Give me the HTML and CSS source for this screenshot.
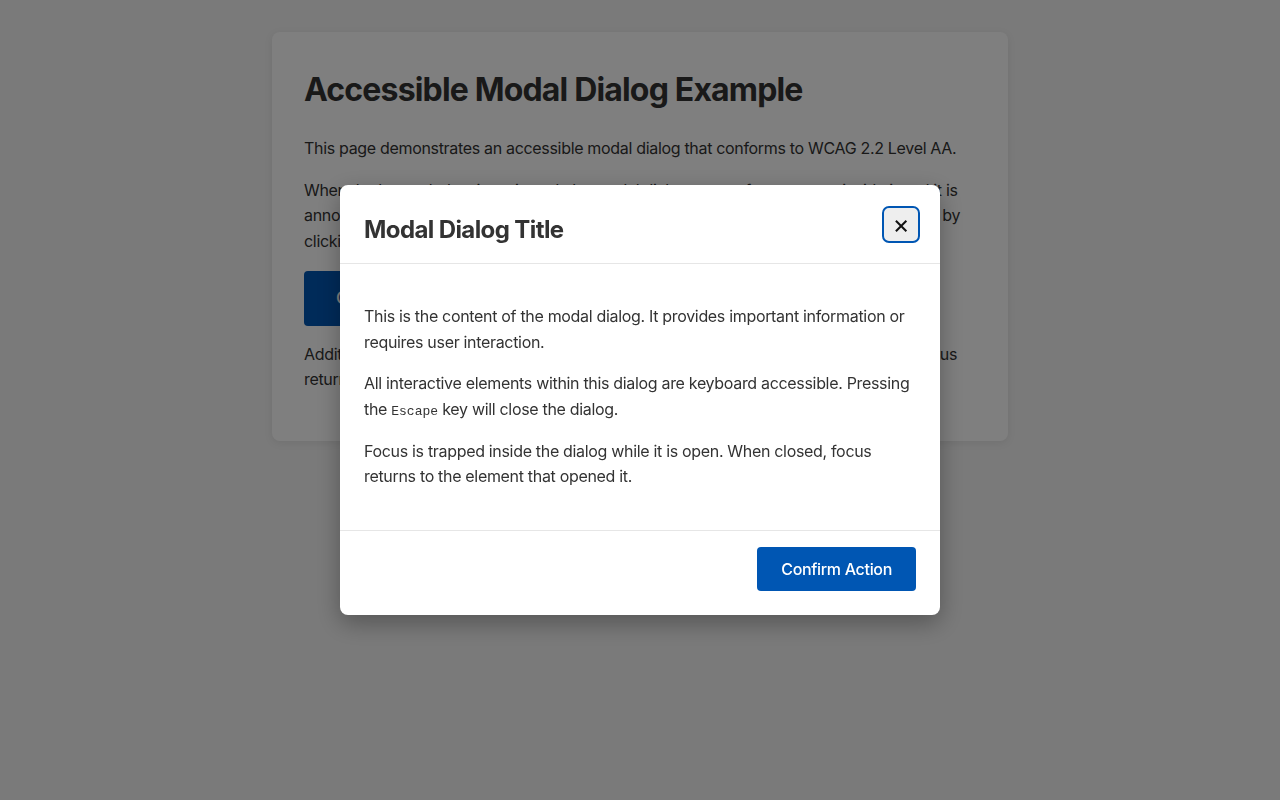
FILE: index.html
```html
<!DOCTYPE html>
<html lang="en">
<head>
  <meta charset="utf-8">
  <title>Accessible Modal Dialog Example</title>
  <link rel="stylesheet" href="styles.css">
</head>
<body>
  <main class="container" aria-hidden="true">
    <h1>Accessible Modal Dialog Example</h1>
    <p>This page demonstrates an accessible modal dialog that conforms to WCAG 2.2 Level AA.</p>
    <p>When the button below is activated, the modal dialog opens, focus moves inside it and it is announced to screen readers. It can be closed with the Escape key, the close button, or by clicking outside of the dialog.</p>
    <button class="button open-button" type="button">Open Modal Dialog</button>
    <p>Additional page content stays inert while the dialog is open. When the dialog closes, focus returns to the button that opened it.</p>
  </main>

  <div class="overlay">
    <div class="modal" role="dialog" aria-modal="true" aria-labelledby="modal-title">
      <div class="modal-header">
        <h2 id="modal-title">Modal Dialog Title</h2>
        <button class="close-button" type="button" aria-label="Close dialog">&times;</button>
      </div>

      <div class="modal-body">
        <p>This is the content of the modal dialog. It provides important information or requires user interaction.</p>
        <p>All interactive elements within this dialog are keyboard accessible. Pressing the <code>Escape</code> key will close the dialog.</p>
        <p>Focus is trapped inside the dialog while it is open. When closed, focus returns to the element that opened it.</p>
      </div>

      <div class="modal-footer">
        <button class="button" type="button">Confirm Action</button>
      </div>
    </div>
  </div>
</body>
</html>
```

FILE: styles.css
```css
body {
  font-family: Inter, "Noto Sans", Arial, sans-serif;
  font-size: 16px;
  line-height: 1.6;
  letter-spacing: -0.02em;
  color: #333;
  background-color: #f4f4f4;
  margin: 0;
  padding: 32px 0;
}

.container {
  background-color: white;
  padding: 32px;
  border-radius: 8px;
  box-shadow: 0 2px 8px rgba(0,0,0,0.08);
  width: 736px;
  box-sizing: border-box;
  margin: 0 auto;
}

h1 {
  font-size: 32px;
  letter-spacing: -0.026em;
  margin: 0 0 21px;
}

p {
  margin: 16px 0;
}

.button {
  background-color: #0056b3;
  color: white;
  font-family: inherit;
  font-size: 16px;
  font-weight: 500;
  letter-spacing: inherit;
  line-height: 24px;
  padding: 10px 24px;
  border: none;
  border-radius: 4px;
  cursor: pointer;
}

.open-button {
  padding: 15px 32px;
  line-height: 25px;
  font-size: 17px;
}

/* backdrop + dialog */
.overlay {
  position: fixed;
  inset: 0;
  background-color: rgba(0,0,0,0.5);
  display: flex;
  justify-content: center;
  align-items: center;
}

.modal {
  background-color: white;
  width: 600px;
  border-radius: 8px;
  box-shadow: 0 8px 24px rgba(0,0,0,0.3);
}

.modal-header {
  display: flex;
  justify-content: space-between;
  align-items: center;
  padding: 20px 22px 20px 24px;
  border-bottom: 1px solid #e6e6e6;
}

.modal-header h2 {
  font-size: 24px;
  letter-spacing: -0.025em;
  line-height: 26px;
  padding-top: 12px;
  margin: 0;
}

.close-button {
  width: 34px;
  height: 33px;
  padding: 0;
  background-color: #eeeeee;
  border: none;
  border-radius: 5px;
  outline: 2px solid #0056b3;
  font-family: inherit;
  font-size: 26px;
  font-weight: 400;
  line-height: 1;
  color: #111;
  cursor: pointer;
}

.modal-body {
  padding: 24px;
}

.modal-body code {
  font-family: "Liberation Mono", "DejaVu Sans Mono", monospace;
  font-size: 13px;
  letter-spacing: 0;
}

.modal-footer {
  display: flex;
  justify-content: flex-end;
  padding: 16px 24px 24px;
  border-top: 1px solid #e6e6e6;
}
```
